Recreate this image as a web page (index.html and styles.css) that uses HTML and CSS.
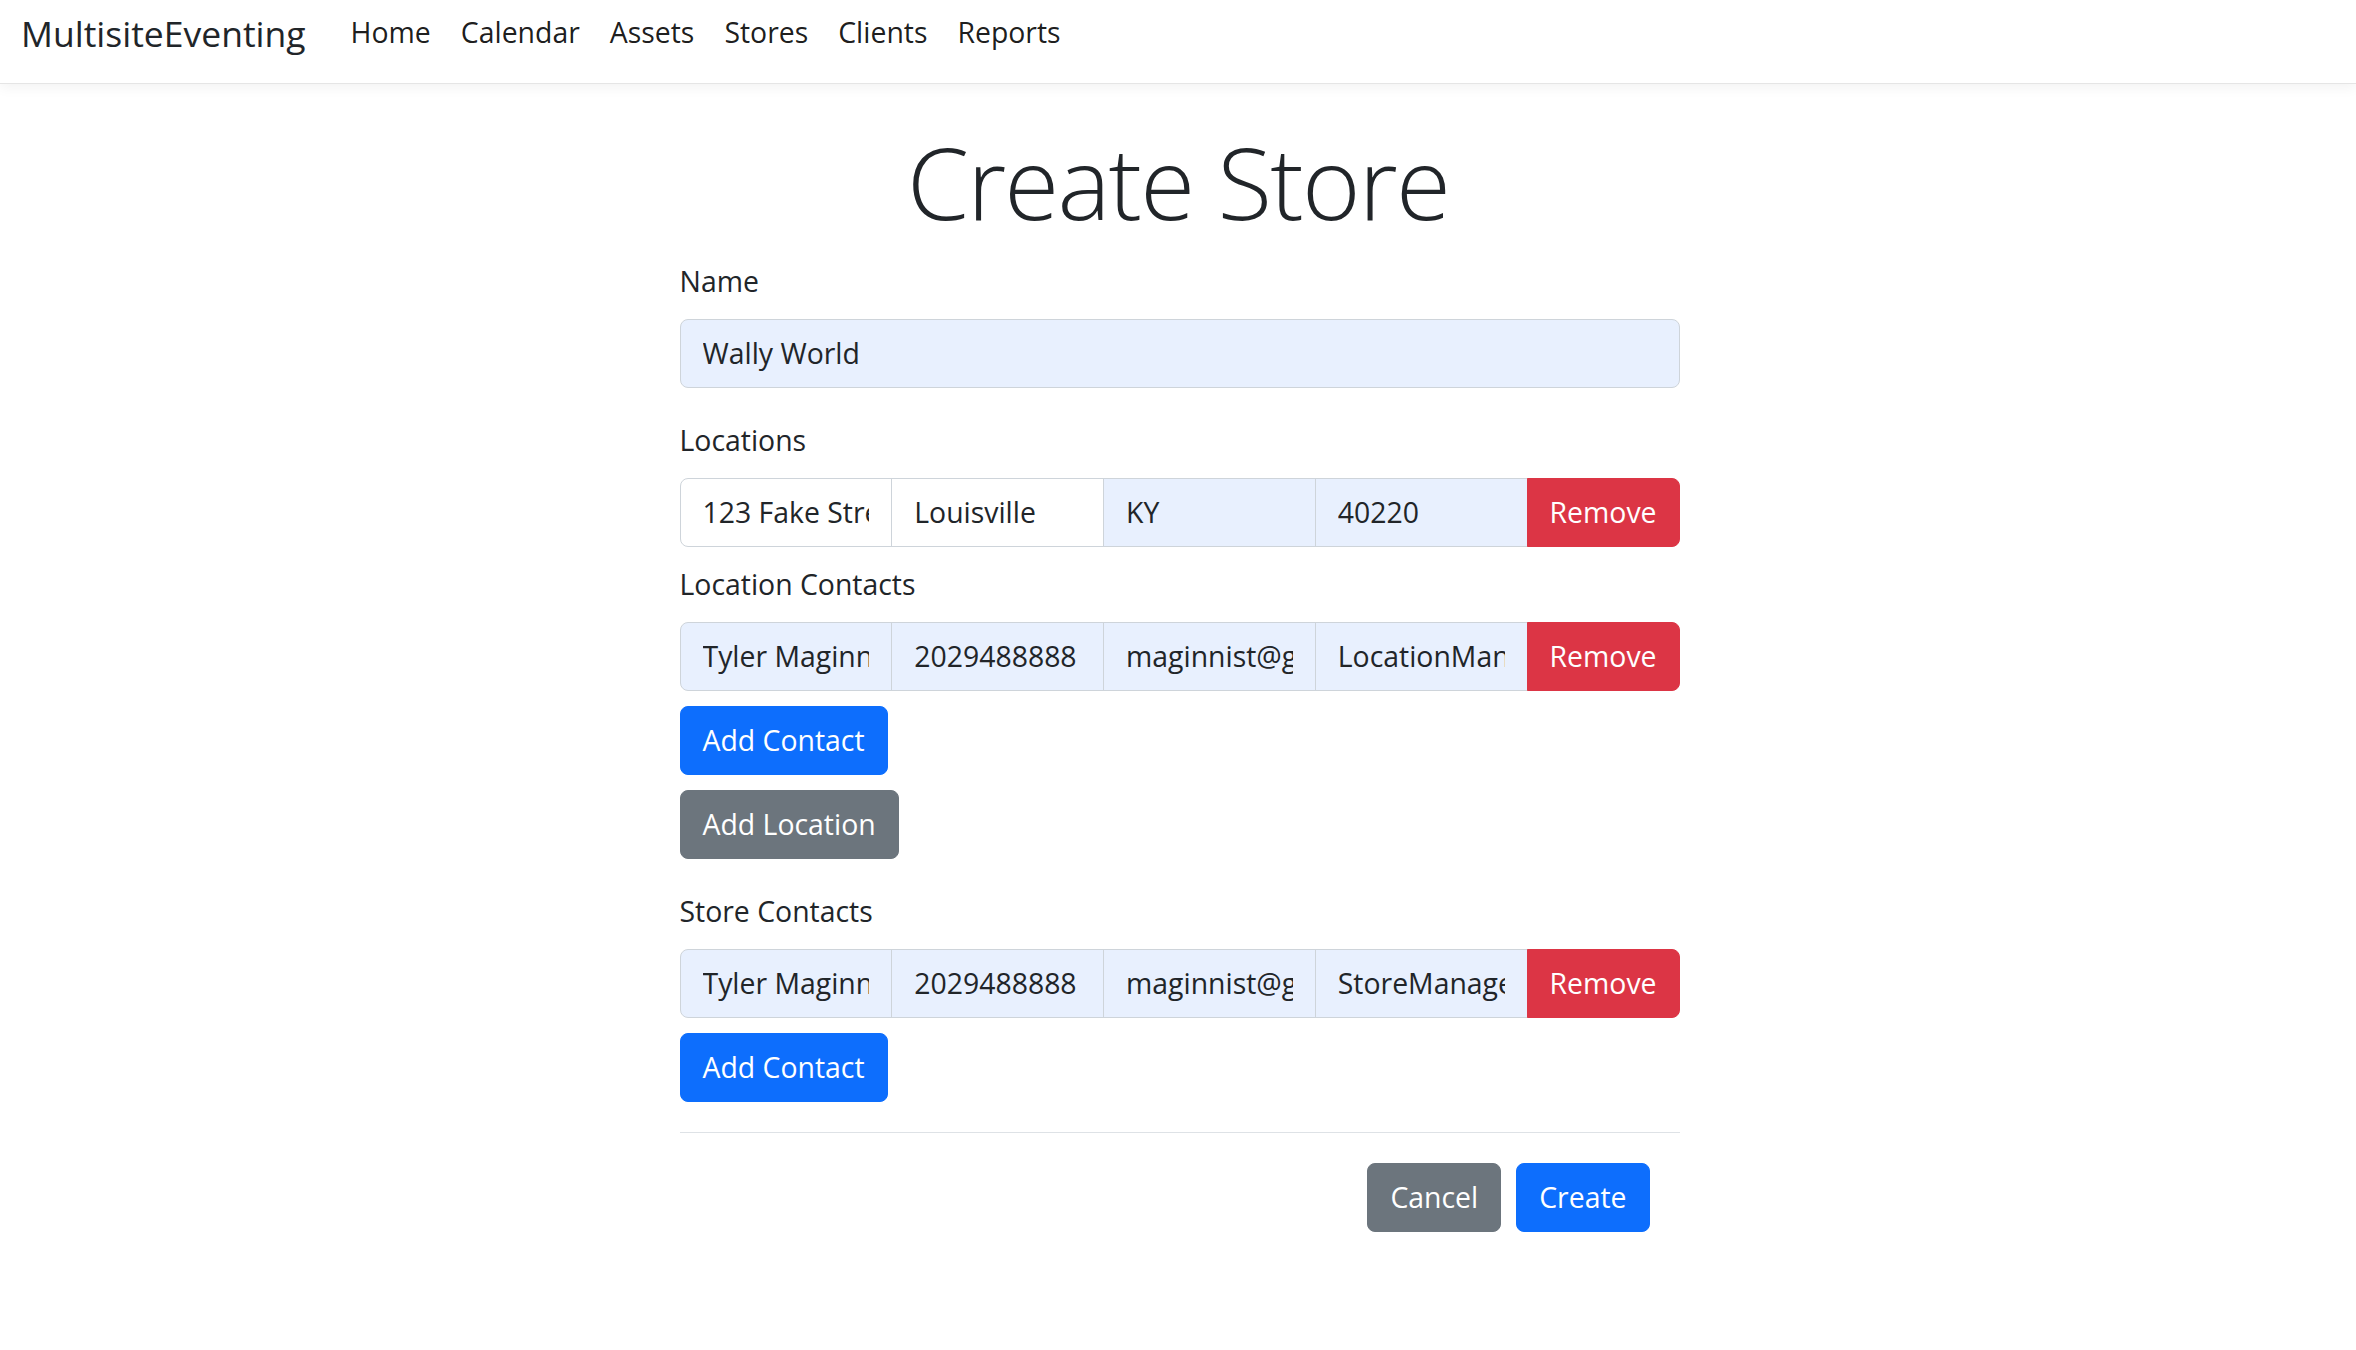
FILE: index.html
```html
<!DOCTYPE html>
<html lang="en">
<head>
<meta charset="utf-8">
<title>Create Store - MultisiteEventing</title>
<link rel="stylesheet" href="styles.css">
</head>
<body>
<header class="navbar">
  <a class="brand" href="#">MultisiteEventing</a>
  <nav class="nav">
    <a class="nav-link" href="#">Home</a>
    <a class="nav-link" href="#">Calendar</a>
    <a class="nav-link" href="#">Assets</a>
    <a class="nav-link" href="#">Stores</a>
    <a class="nav-link" href="#">Clients</a>
    <a class="nav-link" href="#">Reports</a>
  </nav>
</header>
<main class="container">
  <h1 class="title">Create Store</h1>
  <form class="store-form">
    <div class="group">
      <label class="label">Name</label>
      <div class="control autofill"><span class="val">Wally World</span></div>
    </div>

    <div class="group">
      <label class="label">Locations</label>
      <div class="input-row">
        <div class="control"><span class="val">123 Fake Street</span></div>
        <div class="control"><span class="val">Louisville</span></div>
        <div class="control autofill"><span class="val">KY</span></div>
        <div class="control autofill"><span class="val">40220</span></div>
        <button type="button" class="btn btn-danger">Remove</button>
      </div>
      <label class="label sub">Location Contacts</label>
      <div class="input-row">
        <div class="control autofill"><span class="val">Tyler Maginnis</span></div>
        <div class="control autofill"><span class="val">2029488888</span></div>
        <div class="control autofill"><span class="val">maginnist@gmail.com</span></div>
        <div class="control autofill"><span class="val">LocationManager</span></div>
        <button type="button" class="btn btn-danger">Remove</button>
      </div>
      <div class="btn-stack">
        <button type="button" class="btn btn-primary">Add Contact</button>
        <button type="button" class="btn btn-secondary">Add Location</button>
      </div>
    </div>

    <div class="group">
      <label class="label">Store Contacts</label>
      <div class="input-row">
        <div class="control autofill"><span class="val">Tyler Maginnis</span></div>
        <div class="control autofill"><span class="val">2029488888</span></div>
        <div class="control autofill"><span class="val">maginnist@gmail.com</span></div>
        <div class="control autofill"><span class="val">StoreManager</span></div>
        <button type="button" class="btn btn-danger">Remove</button>
      </div>
      <div class="btn-stack">
        <button type="button" class="btn btn-primary">Add Contact</button>
      </div>
    </div>

    <hr class="divider">
    <div class="actions">
      <button type="button" class="btn btn-secondary">Cancel</button>
      <button type="button" class="btn btn-primary">Create</button>
    </div>
  </form>
</main>
</body>
</html>
```
FILE: styles.css
```css
* { box-sizing: border-box; }
html, body { margin: 0; padding: 0; }
body {
  font-family: "Open Sans", "Noto Sans", "Liberation Sans", sans-serif;
  font-size: 28.4px;
  line-height: 45px;
  color: #212529;
  background: #fff;
}
.navbar {
  height: 84px;
  display: flex;
  align-items: flex-start;
  padding: 0 21px;
  border-bottom: 1px solid #e5e5e5;
  box-shadow: 0 4px 12px rgba(0, 0, 0, 0.05);
}
.brand {
  font-size: 35.5px;
  line-height: 56px;
  margin-top: 5px;
  margin-right: 30px;
  color: #212529;
  text-decoration: none;
}
.nav { display: flex; margin-top: 10px; }
.nav-link {
  padding: 0 15px;
  line-height: 45px;
  color: rgba(0, 0, 0, 0.9);
  text-decoration: none;
}
.container { padding-top: 37px; }
.title {
  margin: 0 0 18px;
  text-align: center;
  font-size: 100px;
  font-weight: 300;
  letter-spacing: -1.8px;
  line-height: 120px;
}
.store-form { width: 1000px; margin: 0 auto; padding-left: 3px; box-sizing: content-box; }
.group { margin-bottom: 30px; }
.label { display: block; margin-bottom: 15px; }
.label.sub { margin-top: 15px; }
.control {
  height: 69px;
  padding: 0 22px;
  display: flex;
  align-items: center;
  border: 1px solid #ced4da;
  border-radius: 8px;
  background: #fff;
  color: #212529;
}
.control.autofill { background: #e8f0fe; }
.val { display: block; width: 100%; overflow: hidden; white-space: nowrap; }
.input-row { display: flex; }
.input-row .control { flex: 1 1 0; min-width: 0; border-radius: 0; margin-right: -1px; }
.input-row .control:first-child { border-radius: 8px 0 0 8px; }
.input-row .btn { border-radius: 0 8px 8px 0; position: relative; }
.btn {
  font-family: inherit;
  font-size: 28.4px;
  line-height: 45px;
  padding: 11px 22px;
  border: 1px solid transparent;
  border-radius: 8px;
  color: #fff;
  cursor: pointer;
}
.btn-danger { background: #dc3545; border-color: #dc3545; }
.btn-primary { background: #0d6efd; border-color: #0d6efd; }
.btn-secondary { background: #6c757d; border-color: #6c757d; }
.btn-stack { display: flex; flex-direction: column; align-items: flex-start; gap: 15px; margin-top: 15px; }
.divider { border: 0; border-top: 1px solid #dee2e6; margin: 0 0 30px; }
.actions { display: flex; justify-content: flex-end; gap: 15px; padding-right: 30px; }
```
